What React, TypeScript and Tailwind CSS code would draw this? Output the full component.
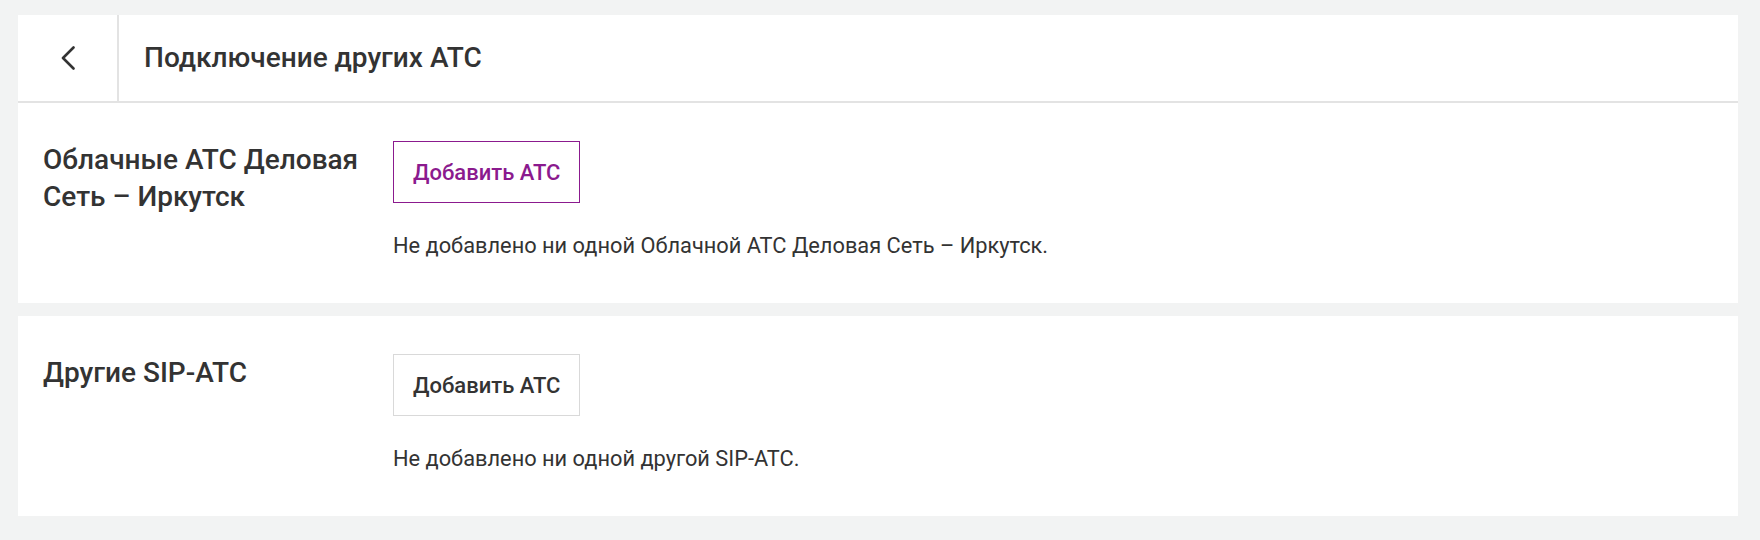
const sections = [
  {
    title: "Облачные АТС Деловая Сеть – Иркутск",
    empty: "Не добавлено ни одной Облачной АТС Деловая Сеть – Иркутск.",
    accent: true,
  },
  {
    title: "Другие SIP-АТС",
    empty: "Не добавлено ни одной другой SIP-АТС.",
    accent: false,
  },
];

export default function App() {
  return (
    <div className="min-h-[540px] bg-[#f2f3f3] pt-[15px] pl-[18px] pr-[22px] text-[#333333] font-['Roboto',sans-serif]">
      <div className="flex h-[88px] bg-white border-b-2 border-[#e3e3e3]">
        <button className="flex w-[101px] items-center justify-center border-r-2 border-[#e3e3e3] text-[#333333]">
          <svg width="16" height="24" viewBox="0 0 16 24" fill="none">
            <polyline points="13.5,1.5 3,12 13.5,22.5" stroke="currentColor" strokeWidth="2.6" strokeLinecap="round" strokeLinejoin="round" />
          </svg>
        </button>
        <h1 className="flex items-center pl-[25px] text-[28px] font-medium">Подключение других АТС</h1>
      </div>

      {sections.map((s, i) => (
        <div key={i} className={`flex h-[200px] bg-white pl-[25px] pt-[38px] ${i > 0 ? "mt-[13px]" : ""}`}>
          <h2 className="w-[350px] shrink-0 pr-4 text-[28px] leading-[37px] font-medium">{s.title}</h2>
          <div className="flex flex-col items-start">
            {s.accent ? (
              <button className="h-[62px] border border-[#8b1a8e] px-[19px] text-[22px] font-medium text-[#8b1a8e]">
                Добавить АТС
              </button>
            ) : (
              <button className="h-[62px] border border-[#d9d9d9] px-[19px] text-[22px] font-medium text-[#333333]">
                Добавить АТС
              </button>
            )}
            <p className="mt-[27px] text-[21.8px] leading-[32px]">{s.empty}</p>
          </div>
        </div>
      ))}
    </div>
  );
}
